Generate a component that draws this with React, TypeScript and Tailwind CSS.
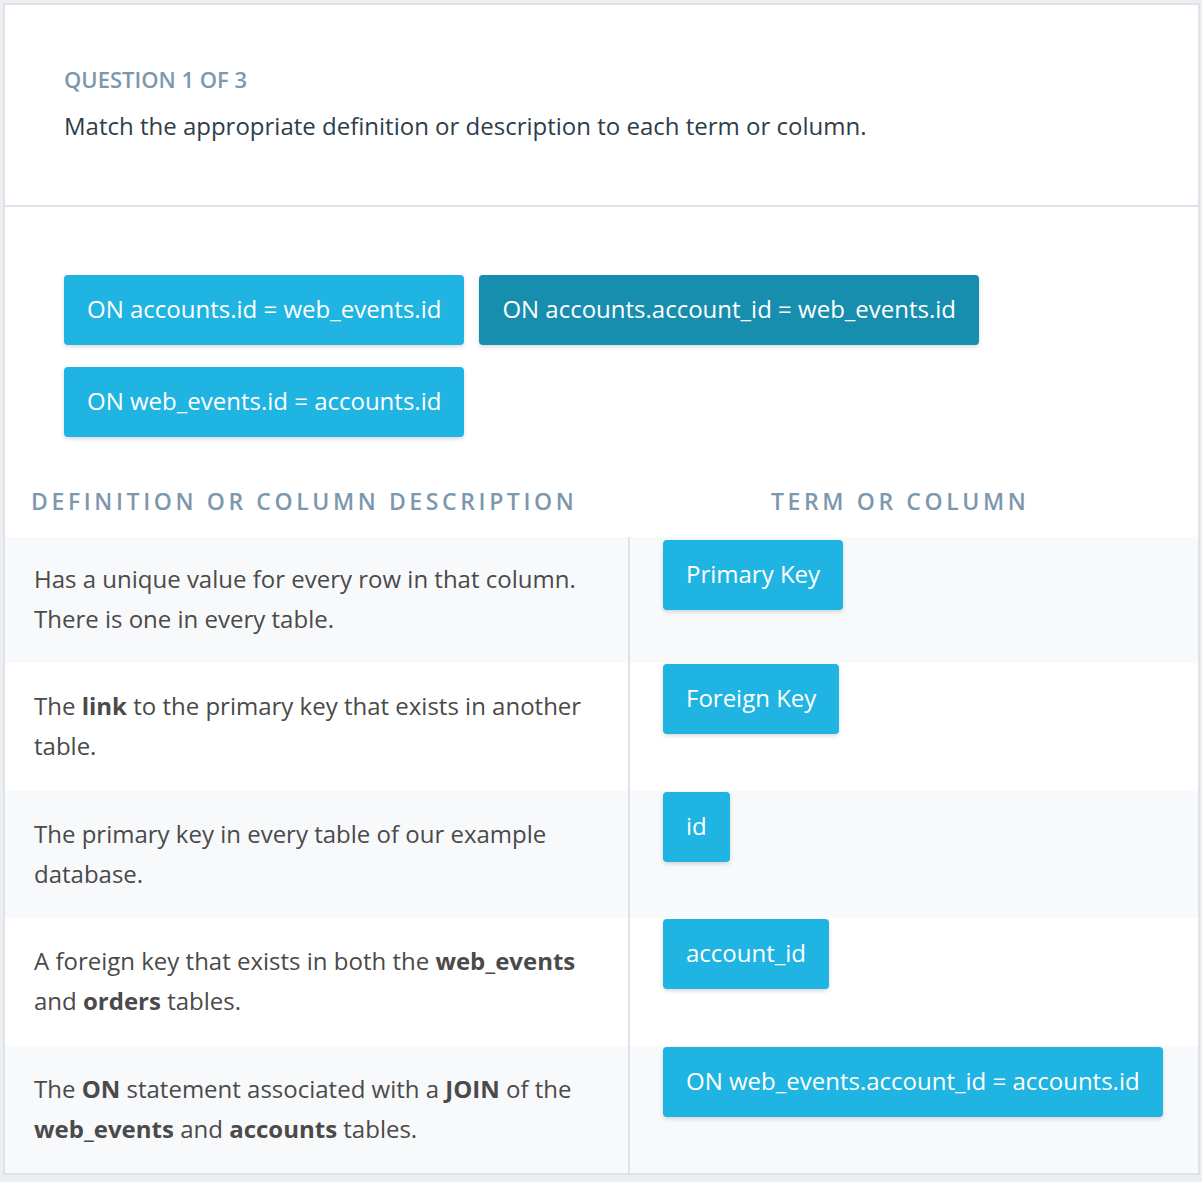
import type { ReactNode } from "react";

const pool = [
  { label: "ON accounts.id = web_events.id", dark: false },
  { label: "ON accounts.account_id = web_events.id", dark: true },
  { label: "ON web_events.id = accounts.id", dark: false },
];

const rows: { text: ReactNode; term: string; h: string; pt: string }[] = [
  {
    text: (
      <>
        Has a unique value for every row in that column.
        <br />
        There is one in every table.
      </>
    ),
    term: "Primary Key",
    h: "h-[126px]",
    pt: "pt-[3px]",
  },
  {
    text: (
      <>
        The <b>link</b> to the primary key that exists in another table.
      </>
    ),
    term: "Foreign Key",
    h: "h-[128px]",
    pt: "pt-[1px]",
  },
  {
    text: <>The primary key in every table of our example database.</>,
    term: "id",
    h: "h-[127px]",
    pt: "pt-[1px]",
  },
  {
    text: (
      <>
        A foreign key that exists in both the <b>web_events</b> and{" "}
        <b>orders</b> tables.
      </>
    ),
    term: "account_id",
    h: "h-[128px]",
    pt: "pt-[1px]",
  },
  {
    text: (
      <>
        The <b>ON</b> statement associated with a <b>JOIN</b> of the{" "}
        <b>web_events</b> and <b>accounts</b> tables.
      </>
    ),
    term: "ON web_events.account_id = accounts.id",
    h: "h-[127px]",
    pt: "pt-[1px]",
  },
];

function Chip({ label, dark }: { label: string; dark?: boolean }) {
  return (
    <div
      className={`h-[70px] px-[23px] pb-[2px] flex items-center rounded-[4px] text-white text-[24px] shadow-[0_2px_4px_rgba(0,0,0,0.15)] whitespace-nowrap ${
        dark ? "bg-[#188eae]" : "bg-[#1fb4e1]"
      }`}
    >
      {label}
    </div>
  );
}

export default function App() {
  return (
    <main
      className="min-h-screen bg-[#eceef0] p-[3px]"
      style={{ fontFamily: '"Open Sans", "Noto Sans", sans-serif' }}
    >
      <div className="w-[1197px] bg-white border-2 border-[#dde3e8]">
        <div className="h-[202px] border-b-2 border-[#dde3e8] pl-[59px] pt-[59px]">
          <div className="text-[22px] leading-[30px] font-semibold uppercase text-[#7d97ad]">
            Question 1 of 3
          </div>
          <p className="mt-[14px] text-[24px] leading-[36px] text-[#2e3d49]">
            Match the appropriate definition or description to each term or
            column.
          </p>
        </div>

        <div className="pt-[68px]">
          <div className="pl-[59px] flex flex-wrap gap-x-[15px] gap-y-[22px] w-[1000px]">
            {pool.map((p) => (
              <Chip key={p.label} label={p.label} dark={p.dark} />
            ))}
          </div>

          <div className="mt-[49px] grid grid-cols-[625px_1fr] h-[51px] items-start">
            <div className="pl-[26px] text-[23px] leading-[30px] font-semibold tracking-[3.6px] uppercase text-[#7d97ad]">
              Definition or column description
            </div>
            <div className="pl-[141px] text-[23px] leading-[30px] font-semibold tracking-[3.6px] uppercase text-[#7d97ad]">
              Term or column
            </div>
          </div>

          <div>
            {rows.map((r, i) => (
              <div
                key={r.term}
                className={`grid grid-cols-[625px_1fr] ${r.h} ${
                  i % 2 === 0 ? "bg-[#f8f9fb]" : "bg-white"
                }`}
              >
                <div className="flex items-center pl-[29px] pr-[29px] pb-[2px] border-r-2 border-[#dde3e8] text-[24px] leading-[40px] text-[#4a4a4a]">
                  <p>{r.text}</p>
                </div>
                <div className={`pl-[33px] ${r.pt} flex items-start`}>
                  <Chip label={r.term} />
                </div>
              </div>
            ))}
          </div>
        </div>
      </div>
    </main>
  );
}
